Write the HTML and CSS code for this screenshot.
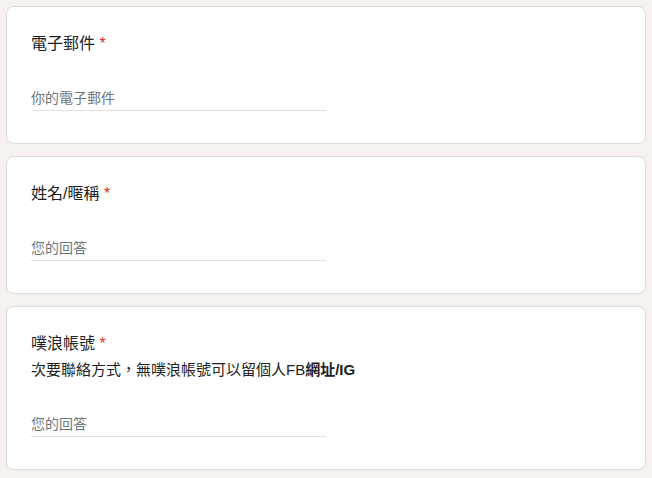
FILE: index.html
```html
<!DOCTYPE html>
<html lang="zh-Hant">
<head>
    <meta charset="UTF-8">
    <meta name="viewport" content="width=device-width, initial-scale=1.0">
    <title>表單</title>
    <link rel="stylesheet" href="styles.css">
</head>
<body>
    <div class="form-list">
        <div class="question-card">
            <div class="question-title">電子郵件 <span class="required">*</span></div>
            <input class="answer-input" type="email" placeholder="你的電子郵件">
        </div>

        <div class="question-card">
            <div class="question-title">姓名/暱稱 <span class="required">*</span></div>
            <input class="answer-input" type="text" placeholder="您的回答">
        </div>

        <div class="question-card">
            <div class="question-title">噗浪帳號 <span class="required">*</span></div>
            <div class="question-desc">次要聯絡方式，無噗浪帳號可以留個人FB<b>網址/IG</b></div>
            <input class="answer-input" type="text" placeholder="您的回答">
        </div>
    </div>
</body>
</html>
```

FILE: styles.css
```css
body {
    font-family: "Liberation Sans", "Noto Sans CJK TC", sans-serif;
    background-color: #f6f0ef;
    color: #202124;
    margin: 0;
    padding: 6px;
}

.form-list {
    display: flex;
    flex-direction: column;
    gap: 12px;
}

.question-card {
    background-color: #fff;
    border: 1px solid #dadce0;
    border-radius: 8px;
    padding: 24px 24px 32px 24px;
    display: flex;
    flex-direction: column;
    align-items: flex-start;
}

.question-title {
    font-size: 16px;
    line-height: 24px;
    margin-top: 1px;
}

.required {
    color: #d93025;
}

.question-desc {
    font-size: 15px;
    line-height: 20px;
    margin: 4px 0 2px 0;
}

.question-desc b {
    font-weight: bold;
}

.answer-input {
    box-sizing: border-box;
    width: 50%;
    height: 23px;
    margin-top: 32px;
    padding: 0 0 2px 0;
    border: none;
    border-bottom: 1px solid #e0e0e0;
    font-family: inherit;
    font-size: 14px;
    line-height: 20px;
    outline: none;
    color: #202124;
}

.answer-input::placeholder {
    color: #70757a;
}
```
